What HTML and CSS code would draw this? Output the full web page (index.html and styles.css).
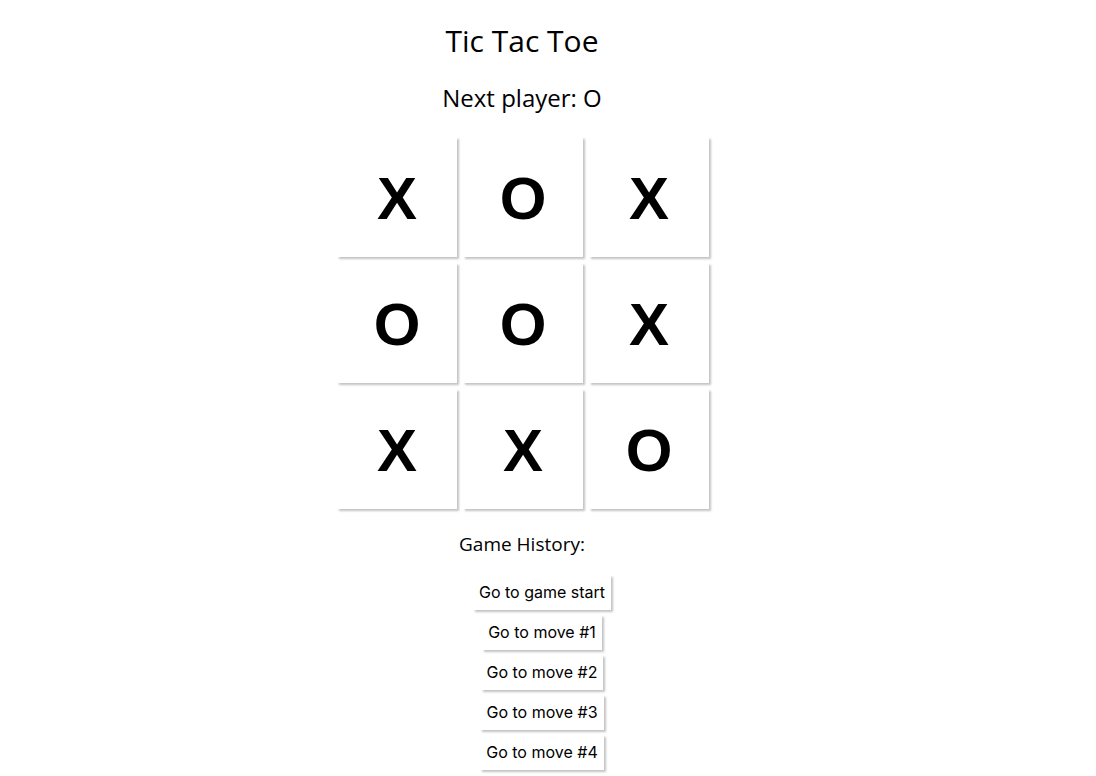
FILE: index.html
```html
<!DOCTYPE html>
<html lang="en">
<head>
<meta charset="utf-8">
<title>Tic Tac Toe</title>
<link rel="stylesheet" href="styles.css">
</head>
<body>
<main class="game">
  <h1 class="title">Tic Tac Toe</h1>
  <p class="status">Next player: O</p>
  <div class="board">
    <button class="square">X</button>
    <button class="square">O</button>
    <button class="square">X</button>
    <button class="square">O</button>
    <button class="square">O</button>
    <button class="square">X</button>
    <button class="square">X</button>
    <button class="square">X</button>
    <button class="square">O</button>
  </div>
  <h2 class="history-title">Game History:</h2>
  <ol class="moves">
    <li><button class="move">Go to game start</button></li>
    <li><button class="move">Go to move #1</button></li>
    <li><button class="move">Go to move #2</button></li>
    <li><button class="move">Go to move #3</button></li>
    <li><button class="move">Go to move #4</button></li>
  </ol>
</main>
</body>
</html>
```
FILE: styles.css
```css
body {
  margin: 0;
  background: #fff;
  color: #000;
  font-family: "Open Sans", "Noto Sans", sans-serif;
}

.game {
  display: flex;
  flex-direction: column;
  align-items: center;
  padding: 20px 52px 4px 0;
}

.title {
  margin: 0;
  font-size: 30px;
  font-weight: 400;
  line-height: 42px;
}

.status {
  margin: 18px 0 21px;
  font-size: 24px;
  line-height: 36px;
}

.board {
  display: grid;
  grid-template-columns: repeat(3, 120px);
  gap: 6px;
  margin-left: 2px;
}

.square,
.move {
  border: 0;
  background: #fff;
  color: #000;
  box-shadow: 2px 2px 2px #c4c4c4;
}

.square {
  height: 120px;
  padding: 3px 0 0;
  font: 700 60px/72px "Liberation Sans", Arial, sans-serif;
}

.history-title {
  margin: 22px 0 18px;
  font-size: 19px;
  font-weight: 400;
  line-height: 26px;
}

.moves {
  display: flex;
  flex-direction: column;
  align-items: center;
  gap: 5px;
  margin: 0;
  padding: 0 0 0 40px;
  list-style: none;
}

.moves li {
  display: flex;
}

.move {
  height: 35px;
  padding: 0 6px 2px;
  font: 400 16px/24px Inter, sans-serif;
}
```
